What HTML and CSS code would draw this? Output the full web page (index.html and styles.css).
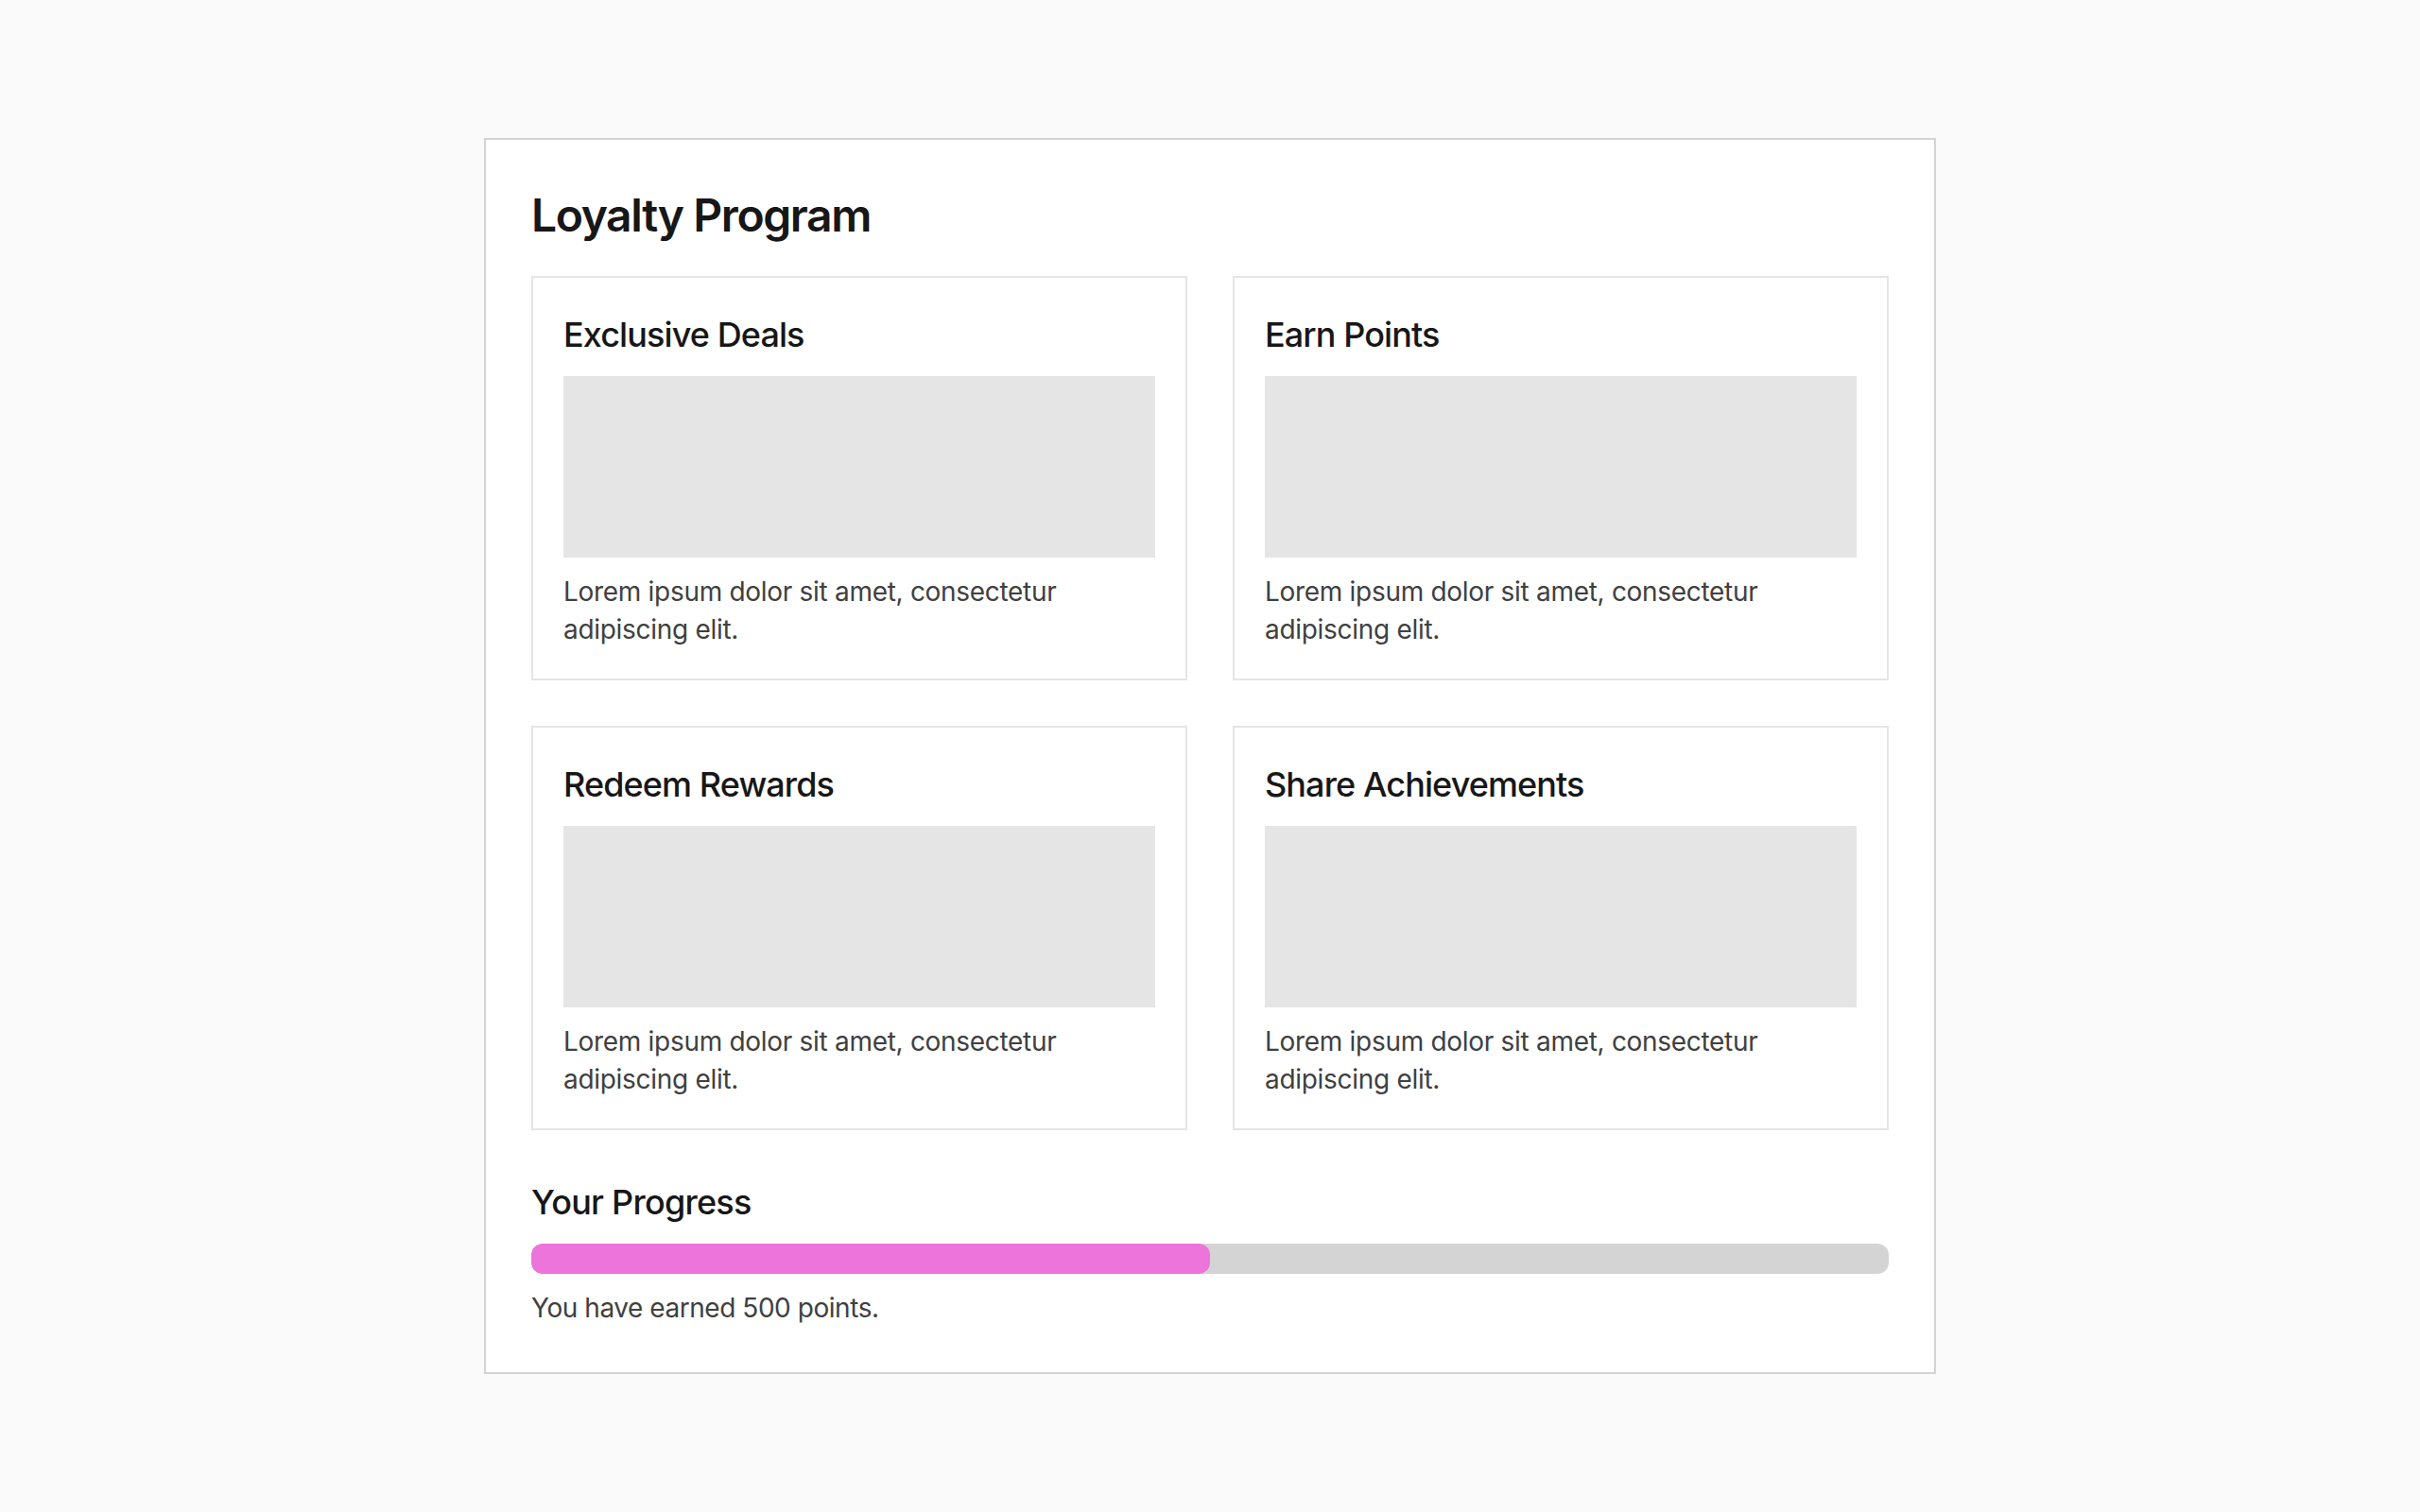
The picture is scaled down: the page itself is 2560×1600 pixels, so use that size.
FILE: index.html
```html
<!DOCTYPE html>
<html lang="en">
<head>
<meta charset="utf-8">
<title>Loyalty Program</title>
<link rel="stylesheet" href="styles.css">
</head>
<body>
<main class="loyalty">
  <h1 class="loyalty-title">Loyalty Program</h1>
  <section class="perks">
    <article class="perk">
      <h2 class="perk-title">Exclusive Deals</h2>
      <div class="perk-media"></div>
      <p class="perk-text">Lorem ipsum dolor sit amet, consectetur adipiscing elit.</p>
    </article>
    <article class="perk">
      <h2 class="perk-title">Earn Points</h2>
      <div class="perk-media"></div>
      <p class="perk-text">Lorem ipsum dolor sit amet, consectetur adipiscing elit.</p>
    </article>
    <article class="perk">
      <h2 class="perk-title">Redeem Rewards</h2>
      <div class="perk-media"></div>
      <p class="perk-text">Lorem ipsum dolor sit amet, consectetur adipiscing elit.</p>
    </article>
    <article class="perk">
      <h2 class="perk-title">Share Achievements</h2>
      <div class="perk-media"></div>
      <p class="perk-text">Lorem ipsum dolor sit amet, consectetur adipiscing elit.</p>
    </article>
  </section>
  <section class="progress">
    <h2 class="progress-title">Your Progress</h2>
    <div class="progress-track">
      <div class="progress-fill" style="width: 50%"></div>
    </div>
    <p class="progress-text">You have earned 500 points.</p>
  </section>
</main>
</body>
</html>
```

FILE: styles.css
```css
* {
  box-sizing: border-box;
}

html,
body {
  margin: 0;
  padding: 0;
}

body {
  background: #fafafa;
  font-family: Inter, "Noto Sans", "Liberation Sans", sans-serif;
  color: #171717;
  padding-top: 146px;
}

.loyalty {
  width: 1536px;
  margin: 0 auto;
  background: #ffffff;
  border: 2px solid #d4d4d4;
  padding: 48px;
}

.loyalty-title {
  margin: 0 0 32px;
  font-size: 48px;
  line-height: 64px;
  font-weight: 600;
  letter-spacing: -1.4px;
  color: #171717;
}

.perks {
  display: grid;
  grid-template-columns: 1fr 1fr;
  gap: 48px;
}

.perk {
  border: 2px solid #e5e5e5;
  padding: 32px;
  background: #ffffff;
}

.perk-title {
  margin: 0 0 16px;
  font-size: 36px;
  line-height: 56px;
  font-weight: 500;
  letter-spacing: -0.9px;
  color: #171717;
}

.perk-media {
  height: 192px;
  background: #e5e5e5;
}

.perk-text {
  margin: 16px 0 0;
  font-size: 28px;
  line-height: 40px;
  letter-spacing: -0.3px;
  color: #404040;
}

.progress {
  margin-top: 48px;
}

.progress-title {
  margin: 0 0 16px;
  font-size: 36px;
  line-height: 56px;
  font-weight: 500;
  letter-spacing: -0.75px;
  color: #171717;
}

.progress-track {
  height: 32px;
  background: #d4d4d4;
  border-radius: 12px;
  overflow: hidden;
}

.progress-fill {
  height: 100%;
  background: #ec74da;
  border-radius: 12px;
}

.progress-text {
  margin: 16px 0 0;
  font-size: 28px;
  line-height: 40px;
  letter-spacing: -0.45px;
  color: #404040;
}
```
